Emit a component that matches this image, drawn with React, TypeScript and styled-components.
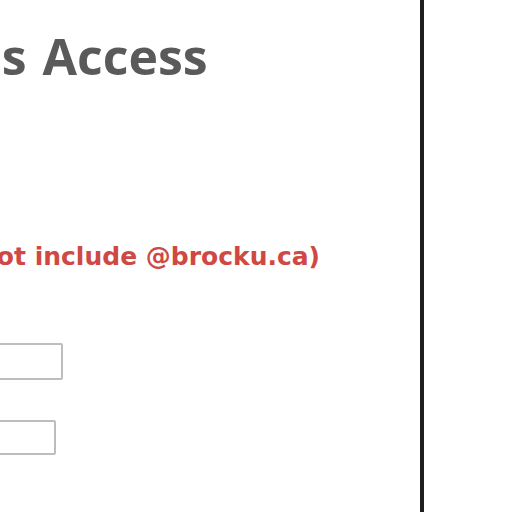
import React from "react";
import styled, { createGlobalStyle } from "styled-components";

const GlobalStyle = createGlobalStyle`
  html, body {
    margin: 0;
    padding: 0;
    background: #ffffff;
    overflow: hidden;
  }
`;

const Screen = styled.div`
  display: flex;
  width: 512px;
  height: 512px;
  background: #ffffff;
`;

const Content = styled.div`
  width: 420px;
  height: 512px;
  overflow: hidden;
  display: flex;
  flex-direction: column;
  align-items: flex-start;
`;

const Rule = styled.div`
  width: 4px;
  height: 512px;
  background: #1e1e1e;
  flex-shrink: 0;
`;

const Side = styled.div`
  flex: 1;
  background: #ffffff;
`;

const Title = styled.h1<{ $shift: number }>`
  margin: 31px 0 0 ${(p) => -p.$shift}px;
  font-family: "Open Sans", "DejaVu Sans", sans-serif;
  font-size: 50px;
  line-height: 50px;
  font-weight: 700;
  word-spacing: 3px;
  color: #5a5a5a;
  white-space: nowrap;
`;

const Hint = styled.p<{ $shift: number }>`
  margin: 163px 0 0 ${(p) => -p.$shift}px;
  font-family: "DejaVu Sans", Verdana, sans-serif;
  font-size: 25px;
  line-height: 25px;
  font-weight: 700;
  color: #d04843;
  white-space: nowrap;
`;

const Field = styled.input<{ $end: number; $top: number; $h: number }>`
  box-sizing: border-box;
  display: block;
  margin: ${(p) => p.$top}px 0 0 ${(p) => p.$end - 200}px;
  width: 200px;
  height: ${(p) => p.$h}px;
  border: 2px solid #bdbdbd;
  border-radius: 2px;
  background: #ffffff;
  outline: none;
  padding: 0 6px;
`;

export default function App() {
  return (
    <>
      <GlobalStyle />
      <Screen>
        <Content>
          <Title $shift={174}>Campus Access</Title>
          <Hint $shift={79}>(Do not include @brocku.ca)</Hint>
          <Field type="text" $end={63} $top={74} $h={37} />
          <Field type="password" $end={56} $top={40} $h={35} />
        </Content>
        <Rule />
        <Side />
      </Screen>
    </>
  );
}
